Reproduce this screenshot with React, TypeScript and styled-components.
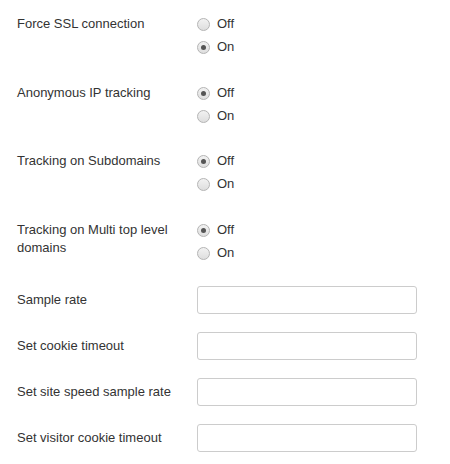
import React from "react";
import styled, { createGlobalStyle } from "styled-components";

const Global = createGlobalStyle`
  html, body { margin: 0; padding: 0; background: #fff; }
  body {
    font-family: "Liberation Sans", Arial, sans-serif;
    font-size: 13px;
    color: #333;
  }
`;

const Form = styled.form`
  display: flex;
  flex-direction: column;
  padding: 15px 0 0 17px;
`;

const Row = styled.div<{ $mb: number; $center?: boolean }>`
  display: grid;
  grid-template-columns: 180px 220px;
  align-items: ${(p) => (p.$center ? "center" : "start")};
  margin-bottom: ${(p) => p.$mb}px;
`;

const Label = styled.label`
  line-height: 18px;
  padding-right: 10px;
`;

const RadioList = styled.div`
  display: flex;
  flex-direction: column;
  gap: 5px;
`;

const Option = styled.label`
  display: flex;
  align-items: center;
  height: 18px;
  gap: 7px;
  line-height: 18px;
`;

const Radio = styled.input.attrs({ type: "radio" })`
  appearance: none;
  -webkit-appearance: none;
  margin: 0;
  width: 13px;
  height: 13px;
  border-radius: 50%;
  border: 1px solid #b4b4b4;
  background: linear-gradient(#f2f2f2, #dedede);
  box-sizing: border-box;
  position: relative;
  flex: none;
  &:checked::after {
    content: "";
    position: absolute;
    left: 3px;
    top: 3px;
    width: 5px;
    height: 5px;
    border-radius: 50%;
    background: #555;
  }
`;

const TextInput = styled.input.attrs({ type: "text" })`
  box-sizing: border-box;
  width: 220px;
  height: 28px;
  margin: 0;
  border: 1px solid #ccc;
  border-radius: 3px;
  background: #fff;
  padding: 4px 6px;
  font: inherit;
`;

type RadioRowProps = { label: string; name: string; on: boolean; mb: number };

const RadioRow = ({ label, name, on, mb }: RadioRowProps) => (
  <Row $mb={mb}>
    <Label>{label}</Label>
    <RadioList>
      <Option>
        <Radio name={name} defaultChecked={!on} />
        Off
      </Option>
      <Option>
        <Radio name={name} defaultChecked={on} />
        On
      </Option>
    </RadioList>
  </Row>
);

const InputRow = ({ label }: { label: string }) => (
  <Row $mb={18} $center>
    <Label>{label}</Label>
    <TextInput />
  </Row>
);

export default function App() {
  return (
    <>
      <Global />
      <Form onSubmit={(e) => e.preventDefault()}>
        <RadioRow label="Force SSL connection" name="ssl" on mb={28} />
        <RadioRow label="Anonymous IP tracking" name="anon" on={false} mb={27} />
        <RadioRow label="Tracking on Subdomains" name="sub" on={false} mb={28} />
        <RadioRow label="Tracking on Multi top level domains" name="multi" on={false} mb={24} />
        <InputRow label="Sample rate" />
        <InputRow label="Set cookie timeout" />
        <InputRow label="Set site speed sample rate" />
        <InputRow label="Set visitor cookie timeout" />
      </Form>
    </>
  );
}
